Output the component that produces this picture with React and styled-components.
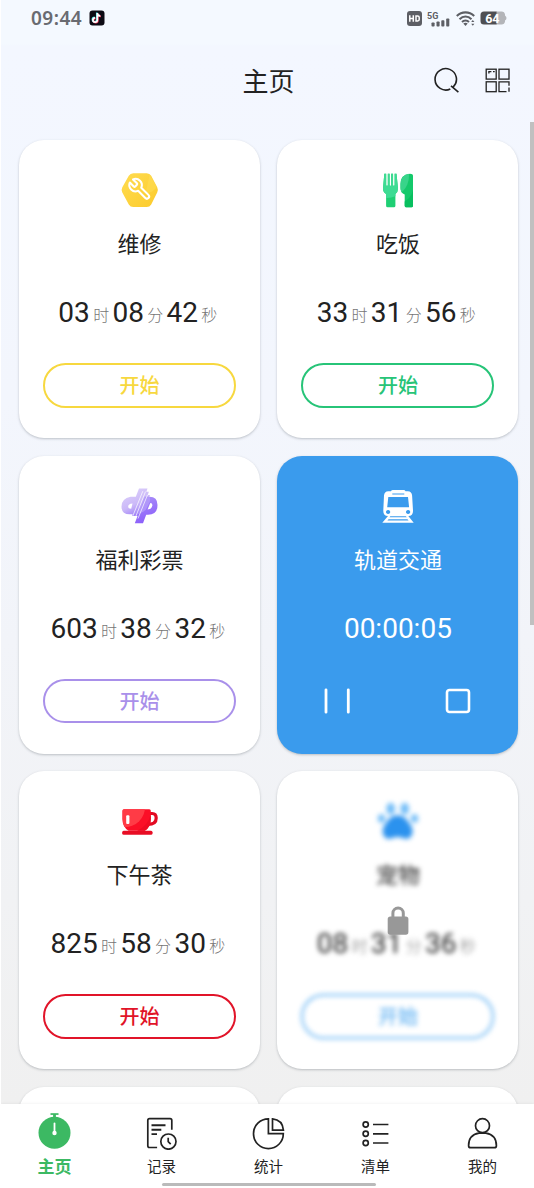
import React from 'react';
import styled, { createGlobalStyle, css } from 'styled-components';

const GlobalStyle = createGlobalStyle`
  * {
    box-sizing: border-box;
  }

  body {
    margin: 0;
    background: #fff;
    font-family: Roboto, "Noto Sans CJK SC", sans-serif;
    color: #222;
  }
`;

const Screen = styled.div`
  width: 534px;
  height: 1188px;
  display: flex;
  flex-direction: column;
  position: relative;
  overflow: hidden;
  border-left: 1px solid #fff;
  background: linear-gradient(to bottom, #f4f9ff 0, #f4f9ff 44px, #f3f7ff 46px, #f3f6fd 400px, #f2f4f9 640px, #f1f2f4 900px, #f0f0f0 1104px);
`;

const StatusBar = styled.header`
  height: 36px;
  flex: none;
  display: flex;
  justify-content: space-between;
  align-items: center;
  padding: 0 27px 0 30px;
`;

const StatusGroup = styled.div`
  display: flex;
  align-items: center;
  gap: ${props => props.$gap}px;
`;

const Clock = styled.span`
  font-family: "Noto Sans", Roboto, sans-serif;
  font-size: 19px;
  font-weight: 600;
  line-height: 20px;
  letter-spacing: 0.5px;
  color: #696b71;
`;

const Title = styled.h1`
  margin: 2px 0 0;
  grid-column: 2;
  font-size: 26px;
  line-height: 36px;
  font-weight: 400;
`;

const TitleBar = styled.div`
  height: 90px;
  flex: none;
  display: grid;
  grid-template-columns: 1fr auto 1fr;
  align-items: center;
  padding: 0 22px 0 24px;
`;

const Actions = styled.div`
  display: flex;
  justify-content: flex-end;
  gap: 23px;

  svg {
    display: block;
  }
`;

const List = styled.main`
  flex: 1;
  min-height: 0;
  overflow: hidden;
  display: grid;
  grid-template-columns: 241px 241px;
  grid-auto-rows: 298px;
  align-content: start;
  gap: 17.5px 17.4px;
  padding: 14px 0 0 18px;
`;

const CardBox = styled.section`
  position: relative;
  padding: 31px 24px 0;
  border-radius: 25px;
  background: ${props => props.$fill || '#fff'};
  color: ${props => props.$fill ? '#fff' : '#222'};
  box-shadow: 0 1px 2.5px rgba(60, 70, 80, 0.3);
`;

const CardBody = styled.div`
  display: flex;
  flex-direction: column;
  align-items: center;

  ${props => props.$locked && css`
    filter: blur(2.4px);
  `}
`;

const IconSlot = styled.div`
  width: 38px;
  height: 38px;

  svg {
    display: block;
  }
`;

const Name = styled.h2`
  margin: 21px 0 0;
  font-size: 22px;
  line-height: 30px;
  font-weight: 400;
`;

const Time = styled.div`
  display: flex;
  align-items: baseline;
  height: 32px;
  margin-top: 37px;
  font-size: 28px;
  line-height: 32px;
`;

const Unit = styled.span`
  margin: 0 3.3px;
  font-size: 16px;
  font-weight: 300;
  line-height: 24px;
  color: #767676;
  transform: translateY(-1px);
`;

const StartButton = styled.button`
  width: 193px;
  height: 44.5px;
  margin-top: 34px;
  padding: 2px 0 0;
  border: 2px solid ${props => props.$color};
  border-radius: 23px;
  background: transparent;
  color: ${props => props.$color};
  font-family: inherit;
  font-size: 20px;
  font-weight: 500;
  line-height: 30px;
`;

const Controls = styled.div`
  width: 100%;
  display: flex;
  justify-content: space-between;
  margin-top: 43px;
  padding: 0 23px;
`;

const LockOverlay = styled.div`
  position: absolute;
  inset: 0;
  display: flex;
  align-items: center;
  justify-content: center;
`;

const ScrollThumb = styled.div`
  position: absolute;
  top: 122px;
  right: 0;
  width: 4px;
  height: 503px;
  background: #c0c0c0;
`;

const NavBar = styled.nav`
  position: relative;
  flex: none;
  height: 84px;
  display: flex;
  overflow: hidden;
  background: #fff;
  box-shadow: 0 0 3px rgba(0, 0, 0, 0.08);
`;

const NavItem = styled.div`
  width: 107px;
  flex: none;
  display: flex;
  flex-direction: column;
  align-items: center;
  padding-top: 8px;
`;

const NavLabel = styled.span`
  margin-top: ${props => props.$active ? 6 : 7}px;
  line-height: 22px;
  font-size: ${props => props.$active ? 17 : 14.5}px;
  font-weight: ${props => props.$active ? 700 : 400};
  color: ${props => props.$active ? '#3cb963' : '#222'};
`;

const HomeIndicator = styled.div`
  position: absolute;
  left: 160.5px;
  bottom: 2px;
  width: 214px;
  height: 3.5px;
  border-radius: 2px;
  background: #bababa;
`;

const TikTokIcon = () => (
  <svg width="16" height="16" viewBox="0 0 16 16">
    <rect x="0.5" y="0.5" width="15" height="15" rx="3" fill="#0d0b14" />
    <g fill="none" strokeWidth="1.7">
      <path d="M8.3 3v7a2.2 2.2 0 1 1-2.2-2.2M8.3 3.4c.3 1.6 1.4 2.5 3 2.6" stroke="#35dfe0" transform="translate(-.5 -.4)" />
      <path d="M8.3 3v7a2.2 2.2 0 1 1-2.2-2.2M8.3 3.4c.3 1.6 1.4 2.5 3 2.6" stroke="#f2375c" transform="translate(.6 .5)" />
      <path d="M8.3 3v7a2.2 2.2 0 1 1-2.2-2.2M8.3 3.4c.3 1.6 1.4 2.5 3 2.6" stroke="#fff" />
    </g>
  </svg>
);

const HdIcon = () => (
  <svg width="15" height="15" viewBox="0 0 15 15">
    <rect width="15" height="15" rx="3" fill="#5d5f65" />
    <path d="M2.8 4.3v6.4M6.3 4.3v6.4M2.8 7.5h3.5M9 5h1.6q1.6 0 1.6 1.4v2.2q0 1.4-1.6 1.4H9z" fill="none" stroke="#fff" strokeWidth="1.5" />
  </svg>
);

const SignalIcon = () => (
  <svg width="23" height="17" viewBox="0 -2 23 17">
    <text x="0" y="6.5" fontSize="9" fontWeight="700" fontFamily="Roboto, sans-serif" fill="#5d5f65">5G</text>
    <g fill="#5d5f65">
      <rect x="4.5" y="10.500" width="3.1" height="4" rx="0.8" />
      <rect x="9.5" y="9.500" width="3.1" height="5" rx="0.8" />
      <rect x="14.3" y="8.200" width="3.1" height="6.3" rx="0.8" />
      <rect x="19.2" y="6.500" width="3.1" height="8" rx="0.8" />
    </g>
  </svg>
);

const WifiIcon = () => (
  <svg width="19" height="15" viewBox="0 0 19 15">
    <g fill="none" stroke="#5d5f65" strokeWidth="2.1">
      <path d="M.8 5C5.8 .2 13.2 .2 18.2 5" />
      <path d="M3.5 8.2C7.2 4.7 11.8 4.7 15.5 8.2" />
      <path d="M6 11C8 9.2 11 9.2 13 11" />
    </g>
    <path d="M7.3 12.6q2.2-1.7 4.4 0L9.5 15z" fill="#5d5f65" />
    <path d="M16.8 8.9l1.6 2.1h-3.2zM16.8 14.8l1.6-2.1h-3.2z" fill="#5d5f65" />
  </svg>
);

const BatteryIcon = () => (
  <svg width="27" height="14" viewBox="0 0 27 14">
    <path d="M16 .5h5.5a3.5 3.5 0 0 1 3.5 3v1q1.5 1 1.5 2.5T25 9.5v1a3.5 3.5 0 0 1-3.5 3H16z" fill="#b3b5b9" />
    <path d="M16.5 .5H4A3.5 3.5 0 0 0 .5 4v6A3.5 3.5 0 0 0 4 13.5h12.5z" fill="#4e4f53" />
    <text x="12.3" y="11.5" textAnchor="middle" fontSize="12.5" fontWeight="700" fontFamily="Roboto, sans-serif" fill="#fff">64</text>
  </svg>
);

const SearchIcon = () => (
  <svg width="28" height="28" viewBox="0 0 28 28" fill="none" stroke="#222" strokeWidth="1.6">
    <path d="M17.3 22A10.7 10.7 0 1 1 20.3 19.9M18 18.8l7.4 6.3" />
  </svg>
);

const QrIcon = () => (
  <svg width="28" height="28" viewBox="0 0 28 28" fill="none" stroke="#222" strokeWidth="1.3">
    <rect x="2.2" y="2.2" width="10" height="9.9" />
    <rect x="15" y="2.2" width="10" height="9.9" />
    <rect x="2.2" y="14.8" width="10" height="9.9" />
    <path d="M22.500 24.7H15v-9.900h10v4M25 20.500v4.200M4.900 6.500V4.700h2.500M9 4.700h1.700" />
  </svg>
);

const RepairIcon = () => (
  <svg width="38" height="38" viewBox="0 0 38 38">
    <defs>
      <linearGradient id="repair" x1="0" y1="0" x2="1" y2="1">
        <stop offset="0" stopColor="#ffdc50" />
        <stop offset="1" stopColor="#fccb2c" />
      </linearGradient>
    </defs>
    <path d="M12.3 2.2h13.4q3 0 4.5 2.500l6 11.5q1.300 2.600 0 5.200l-6 12.200q-1.500 2.500-4.500 2.500H12.300q-3 0-4.500-2.500L1.300 21.400q-1.300-2.600 0-5.200l6.500-11.500q1.500-2.500 4.500-2.500z" fill="url(#repair)" />
    <path d="M28.7 3.5L35.8 16q-3.6 5.5-11.3 6.7z" fill="#ffe15a" opacity=".45" />
    <path
      d="M14.7 6.3a1 1 0 0 0 0 1.4l1.6 1.6a1 1 0 0 0 1.4 0l3.77-3.77a6 6 0 0 1-7.94 7.94l-6.91 6.91a2.12 2.12 0 0 1-3-3l6.91-6.91a6 6 0 0 1 7.94-7.94l-3.76 3.76z"
      transform="translate(31.2 5.8) scale(-1.04 1.04)"
      fill="none"
      stroke="#fff"
      strokeWidth="2"
      strokeLinejoin="round"
    />
  </svg>
);

const forkPath = 'M5.3 2.7h2v11.300q0 .8.7.8t.7-.8V2.700h2v11.300q0 .8.7.8t.7-.8V2.700h2v11.300q0 .8.7.8t.7-.8V2.700h2L19 17.500q0 3.500-2.600 5.500v11.700q0 1.500-1.500 1.500H8.600q-1.500 0-1.500-1.500V23Q4 21 4 17.500z';
const knifePath = 'M31 2.7q3 0 3 2v30q0 1.5-1.5 1.5h-5.3q-1.5 0-1.5-1.5V23.5Q21.5 22 21.5 17V13q0-9.5 9.5-10.3z';

const MealIcon = () => (
  <svg width="38" height="38" viewBox="0 0 38 38">
    <defs>
      <clipPath id="mealLight"><circle cx="8" cy="5" r="22" /></clipPath>
    </defs>
    <path d={forkPath} fill="#1fcf74" />
    <path d={knifePath} fill="#14c96b" />
    <g clipPath="url(#mealLight)">
      <path d={forkPath} fill="#3ddb93" />
      <path d={knifePath} fill="#38d48a" />
    </g>
    <path d="M34 19v15.7q0 1.5-1.5 1.5h-5.3q-1.5 0-1.5-1.5V30.5Q32 27 34 19z" fill="#08bf5f" />
    <path d="M8 2v12.500M11.400 2v12.500M14.800 2v12.500" stroke="#fff" strokeWidth="0.700" />
  </svg>
);

const LotteryIcon = () => (
  <svg width="38" height="38" viewBox="0 0 38 38">
    <defs>
      <linearGradient id="dLeft" x1="0" y1="0" x2="0.5" y2="1">
        <stop offset="0" stopColor="#e0d5fb" />
        <stop offset="0.65" stopColor="#cbb9f8" />
        <stop offset="1" stopColor="#9f7ff8" />
      </linearGradient>
      <linearGradient id="pRight" x1="0.3" y1="0" x2="0.6" y2="1">
        <stop offset="0" stopColor="#a98ff8" />
        <stop offset="1" stopColor="#8a5cfb" />
      </linearGradient>
    </defs>
    <path
      d="M18 1.5h8.5l-1.2 3.3h2.5l-1 3.1h2.2l-8 21h-10l.6-1.6H8.5Q.5 27.3.5 19.5T9.5 9.8h5.3z M11.5 16.4q-4.3.2-4.3 3.2 0 2.2 3 2.2z"
      fill="url(#dLeft)"
      fillRule="evenodd"
    />
    <path
      d="M24 9.8h4.5q8 0 8 8.2 0 9.8-9.5 9.8h-1.8l-3.2 8.4h-8.2l3.2-8.4 3.2-8z M29.3 16q2.5 0 2 2.7-.7 3.5-4.7 3.8z"
      fill="url(#pRight)"
      fillRule="evenodd"
    />
    <path d="M23 9.8h5.500q1.5 3-.6 6.800L25 22.500q-3 3.500-8 4.500z" fill="#b69ff9" opacity=".7" />
    <path d="M24.500 4.600L14 31.500M26.500 7.900L17 31.500M21.800 4.200L11.800 29" stroke="#fff" strokeWidth=".7" />
  </svg>
);

const TrainIcon = () => (
  <svg width="38" height="38" viewBox="0 0 38 38">
    <path
      d="M12 4.3Q12.3 3 14 3h10.5q1.7 0 2 1.3h2.3q4 .2 4.3 4.2L34 23.5q.2 5.3-4.7 5.5l5.4 6.7H3.3L9 29q-4.9-.2-4.7-5.5L5 8.5q.3-4 4.3-4.2z
        M13.3 6.6v.8h12v-.8z
        M9.3 9.9L8.2 20.3h21.9L29 9.9z
        M9.1 22.9a2.1 2.1 0 1 0 .01 0z
        M29.1 22.9a2.1 2.1 0 1 0 .01 0z
        M11.3 29.3l-.8 1h17.2l-.8-1z
        M9.6 32.3l-1.2 1.3h21.2l-1.2-1.3z"
      fill="#fff"
      fillRule="evenodd"
    />
  </svg>
);

const cupPath = 'M3 7.3h25.3q1.5 0 1.5 1.5V17q0 8-6 11.8H7.5Q1.5 25 1.5 17V8.8q0-1.5 1.5-1.5z';

const TeaIcon = () => (
  <svg width="38" height="38" viewBox="0 0 38 38">
    <defs>
      <clipPath id="teaLight"><circle cx="4" cy="5" r="20" /></clipPath>
    </defs>
    <path d="M29 11.5h2.2q4 0 4 4.5 0 6.5-8.4 6.5" fill="none" stroke="#e20a22" strokeWidth="3.2" />
    <path d={cupPath} fill="#fb0f27" />
    <path d={cupPath} fill="#ff3b46" clipPath="url(#teaLight)" />
    <path d="M29.8 12v5q0 8-6 11.8H16Q27 24 29.8 12z" fill="#ef0b22" />
    <rect x="5.2" y="13.3" width="3.2" height="8.8" rx="1" fill="#fff" />
    <rect x="1.2" y="28.8" width="30.3" height="4" rx="1.5" fill="#e80d24" />
  </svg>
);

const PawIcon = () => (
  <svg width="38" height="38" viewBox="0 0 38 38" overflow="visible">
    <g fill="#6fbcf8">
      <ellipse cx="11.7" cy="6.7" rx="4.3" ry="6" />
      <ellipse cx="25.7" cy="6.7" rx="4.3" ry="6" />
      <ellipse cx="2.5" cy="16.5" rx="3.6" ry="4.2" />
      <ellipse cx="35.5" cy="16.5" rx="3.6" ry="4.2" />
    </g>
    <path d="M18.6 13.2q7.4 0 11.4 7.8 4.5 5 3.3 10.5-2 7-8.8 4.8-5.9-2.5-11.8 0Q5.9 38.5 3.9 31.5 2.7 26 7.2 21q4-7.8 11.4-7.8z" fill="#2b92ee" />
  </svg>
);

const LockIcon = () => (
  <svg width="22" height="29" viewBox="0 0 22 29">
    <path d="M5.9 12V7.2a5.2 5.2 0 0 1 10.4 0V12" fill="none" stroke="#989898" strokeWidth="3" />
    <rect x="0.7" y="10.5" width="20.7" height="18.2" rx="2.6" fill="#989898" />
  </svg>
);

const PauseIcon = () => (
  <svg width="28" height="26" viewBox="0 0 28 26" stroke="#fff" strokeWidth="2.8" strokeLinecap="round">
    <path d="M2 1.8v22.4M24.3 1.8v22.4" />
  </svg>
);

const StopIcon = () => (
  <svg width="26" height="26" viewBox="0 0 26 26">
    <rect x="2" y="2" width="22" height="22" rx="2.5" fill="none" stroke="#fff" strokeWidth="2.6" />
  </svg>
);

const NavSvg = ({ children }) => (
  <svg width="37" height="38" viewBox="-0.5 0 37 38" fill="none" stroke="#222" strokeWidth="1.7">
    {children}
  </svg>
);

const HomeIcon = () => (
  <NavSvg>
    <g stroke="none" fill="#3cb963">
      <circle cx="18" cy="20.7" r="16" />
      <rect x="14" y="1.2" width="8" height="1.7" />
      <rect x="16.6" y="2" width="2.8" height="4" />
    </g>
    <path d="M18 11.5v8" stroke="#fff" strokeWidth="1.8" strokeLinecap="round" />
    <circle cx="18" cy="21" r="2.2" fill="#fff" stroke="none" />
  </NavSvg>
);

const RecordIcon = () => (
  <NavSvg>
    <path d="M13.6 35.5H6Q4.3 35.5 4.3 33.8V8.4Q4.3 6.7 6 6.7h20.6q1.7 0 1.7 1.7v9.4" />
    <path d="M8 13.2h14M8 17.7h9.8M8 22.1h5.5" strokeWidth="1.9" />
    <circle cx="24.9" cy="29.6" r="7.6" />
    <path d="M24.7 25.7v4l2.5 2.4" />
  </NavSvg>
);

const StatsIcon = () => (
  <NavSvg>
    <path d="M17.9 6.8A14.9 14.9 0 1 0 32.8 21.7H17.9z" />
    <path d="M22 6.9q10 1 10.9 11.2H22z" />
  </NavSvg>
);

const ListIcon = () => (
  <NavSvg>
    <circle cx="8.2" cy="12.5" r="2.6" />
    <circle cx="8.2" cy="21.8" r="2.6" />
    <circle cx="8.2" cy="31" r="2.6" />
    <path d="M15.5 12.5h15.4M15.5 21.8h15.4M15.5 31h15.4" />
  </NavSvg>
);

const UserIcon = () => (
  <NavSvg>
    <circle cx="18" cy="13.7" r="7" />
    <path d="M14.5 21.2h6.8q10.6 1.6 10.6 12.5 0 2-2 2H6.1q-2 0-2-2 0-10.9 10.4-12.5z" strokeLinejoin="round" />
  </NavSvg>
);

const TimeTotal = ({ value }) => (
  <Time>
    {value[0]}<Unit>时</Unit>
    {value[1]}<Unit>分</Unit>
    {value[2]}<Unit>秒</Unit>
  </Time>
);

const TimerCard = ({ icon, name, time, color, locked }) => (
  <CardBox>
    <CardBody $locked={locked}>
      <IconSlot>{icon}</IconSlot>
      <Name>{name}</Name>
      <TimeTotal value={time} />
      <StartButton $color={color}>开始</StartButton>
    </CardBody>
    {locked && <LockOverlay><LockIcon /></LockOverlay>}
  </CardBox>
);

const RunningCard = ({ icon, name, time, color }) => (
  <CardBox $fill={color}>
    <CardBody>
      <IconSlot>{icon}</IconSlot>
      <Name>{name}</Name>
      <Time>{time}</Time>
      <Controls>
        <PauseIcon />
        <StopIcon />
      </Controls>
    </CardBody>
  </CardBox>
);

const tabs = [
  { label: '主页', icon: <HomeIcon />, active: true },
  { label: '记录', icon: <RecordIcon /> },
  { label: '统计', icon: <StatsIcon /> },
  { label: '清单', icon: <ListIcon /> },
  { label: '我的', icon: <UserIcon /> },
];

const App = () => (
  <>
    <GlobalStyle />
    <Screen>
      <StatusBar>
        <StatusGroup $gap={7}>
          <Clock>09:44</Clock>
          <TikTokIcon />
        </StatusGroup>
        <StatusGroup $gap={5.5}>
          <HdIcon />
          <SignalIcon />
          <WifiIcon />
          <BatteryIcon />
        </StatusGroup>
      </StatusBar>

      <TitleBar>
        <Title>主页</Title>
        <Actions>
          <SearchIcon />
          <QrIcon />
        </Actions>
      </TitleBar>

      <List>
        <TimerCard icon={<RepairIcon />} name="维修" time={['03', '08', '42']} color="#f7d83f" />
        <TimerCard icon={<MealIcon />} name="吃饭" time={['33', '31', '56']} color="#27c478" />
        <TimerCard icon={<LotteryIcon />} name="福利彩票" time={['603', '38', '32']} color="#a990ea" />
        <RunningCard icon={<TrainIcon />} name="轨道交通" time="00:00:05" color="#3a9bed" />
        <TimerCard icon={<TeaIcon />} name="下午茶" time={['825', '58', '30']} color="#e11429" />
        <TimerCard icon={<PawIcon />} name="宠物" time={['08', '31', '36']} color="#68b5f3" locked />
        <CardBox />
        <CardBox />
      </List>

      <NavBar>
        {tabs.map(tab => (
          <NavItem key={tab.label}>
            {tab.icon}
            <NavLabel $active={tab.active}>{tab.label}</NavLabel>
          </NavItem>
        ))}
        <HomeIndicator />
      </NavBar>
      <ScrollThumb />
    </Screen>
  </>
);

export default App;
